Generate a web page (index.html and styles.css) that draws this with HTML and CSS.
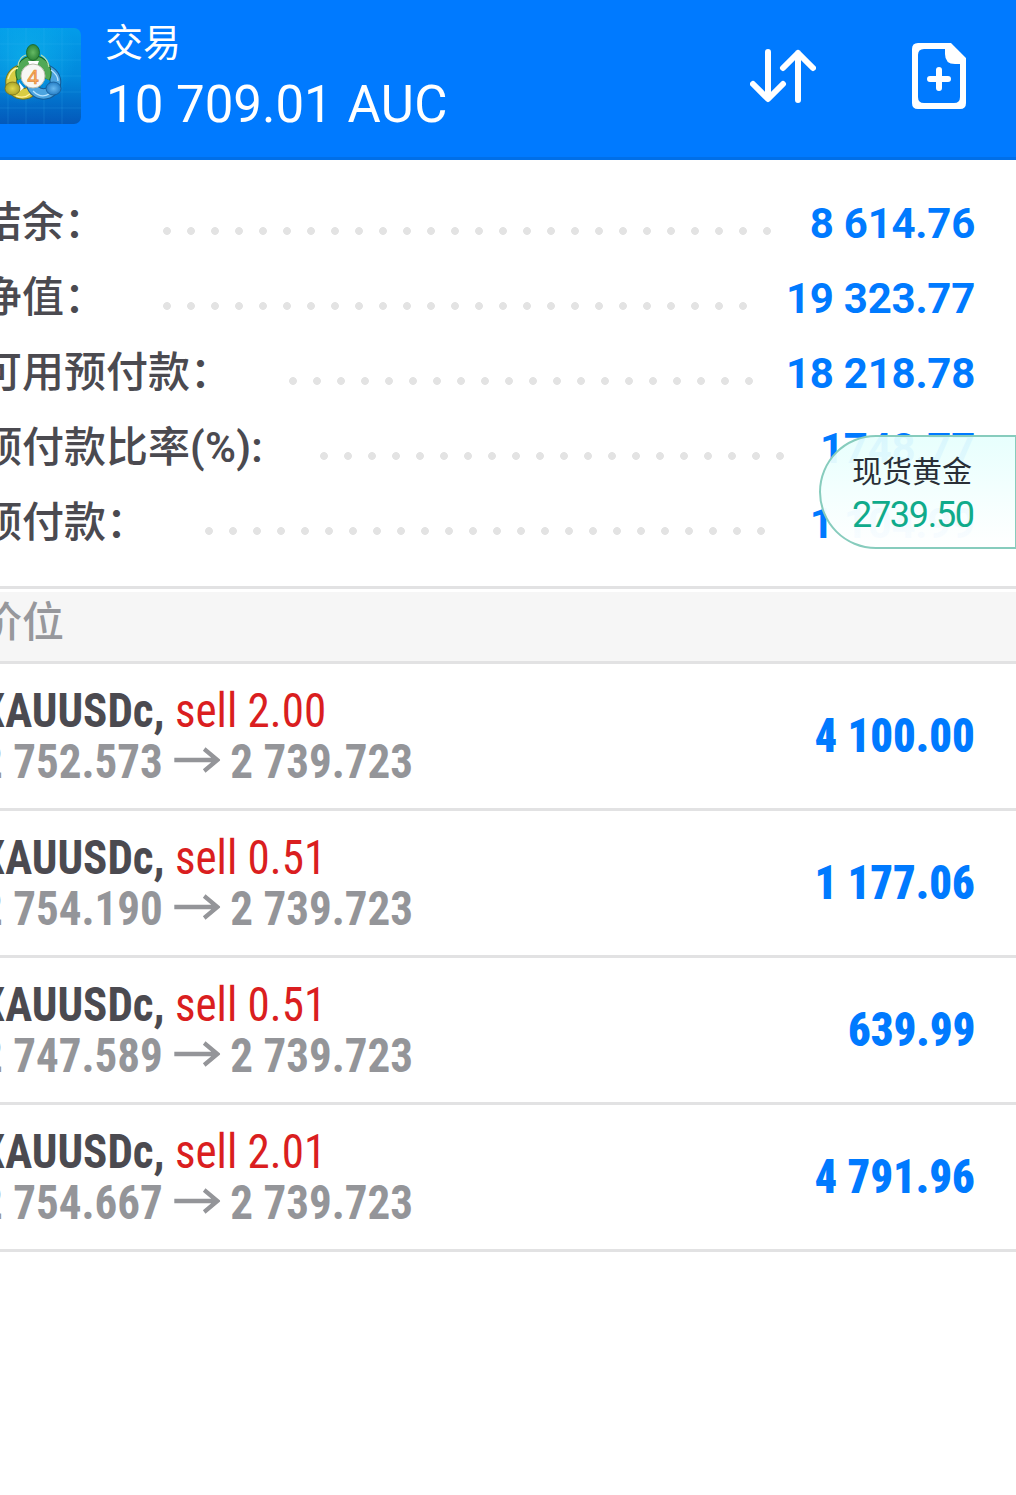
FILE: index.html
```html
<!DOCTYPE html>
<html lang="zh-CN">
<head>
<meta charset="utf-8">
<title>交易</title>
<link rel="stylesheet" href="styles.css">
</head>
<body>
<header class="topbar">
  <svg class="logo" width="101" height="96" viewBox="-20 0 101 96">
    <defs>
      <linearGradient id="tile" x1="0" y1="0" x2="0" y2="1"><stop offset="0" stop-color="#039ce9"/><stop offset=".5" stop-color="#0289dc"/><stop offset="1" stop-color="#0358ba"/></linearGradient>
      <radialGradient id="glow" cx=".46" cy=".3" r=".5"><stop offset="0" stop-color="#10b9ed" stop-opacity=".6"/><stop offset="1" stop-color="#10b9ed" stop-opacity="0"/></radialGradient>
      <radialGradient id="green"><stop offset="0" stop-color="#65b964"/><stop offset="1" stop-color="#2d8538"/></radialGradient>
      <radialGradient id="gold"><stop offset="0" stop-color="#e2d84a"/><stop offset="1" stop-color="#a9a328"/></radialGradient>
      <radialGradient id="blue"><stop offset="0" stop-color="#68b8ef"/><stop offset="1" stop-color="#267ec6"/></radialGradient>
    </defs>
    <rect x="-20" width="101" height="96" rx="7" fill="url(#tile)"/>
    <rect x="-20" width="101" height="96" rx="7" fill="url(#glow)"/>
    <path d="M8 0V96M26 0V96M44 0V96M62 0V96M-20 16H81M-20 32H81M-20 48H81M-20 64H81M-20 80H81" stroke="#43b9ef" stroke-opacity=".2" fill="none"/>
    <g fill="none">
      <circle cx="23" cy="54" r="12" stroke="#77751d" stroke-width="11.500"/>
      <circle cx="23" cy="54" r="12" stroke="#d8cd43" stroke-width="9.500"/>
      <circle cx="43.500" cy="54" r="12" stroke="#155b96" stroke-width="11.500"/>
      <circle cx="43.500" cy="54" r="12" stroke="#4ca4df" stroke-width="9.500"/>
      <path d="M22.500 50A12 12 0 1 1 44.500 50" stroke="#17651f" stroke-width="12"/>
      <path d="M22.500 50A12 12 0 1 1 44.500 50" stroke="#51a956" stroke-width="10"/>
      <path d="M18 38Q19 29 26 27M41 27Q48 31 49 39" stroke="#b8dfaf" stroke-width="1.3"/>
      <path d="M8 51Q11 41 18 40M16 68Q24 71 30 66" stroke="#fff2a0" stroke-width="1.3"/>
      <path d="M51 42Q58 47 58 53M33 63Q41 71 49 66" stroke="#b7e3ff" stroke-width="1.3"/>
    </g>
    <path d="M28 33H39L37 38H30ZM19 54L24 60 20 63Z" fill="#fff"/>
    <ellipse cx="33" cy="24.500" rx="6.500" ry="8" fill="url(#green)" stroke="#176226" stroke-width=".8"/>
    <ellipse cx="12.500" cy="60.500" rx="7.500" ry="6.500" fill="url(#gold)" stroke="#777019" stroke-width=".8"/>
    <ellipse cx="53.500" cy="60.500" rx="7.500" ry="6.500" fill="url(#blue)" stroke="#155b96" stroke-width=".8"/>
    <circle cx="33" cy="48" r="12" fill="#f7f7f4" stroke="#b9bcae"/>
    <text x="33" y="55.500" class="logo-number">4</text>
  </svg>
  <div class="heading"><div class="title">交易</div><div class="profit">10 709.01 <span class="currency">AUC</span></div></div>
  <svg class="sort" width="66" height="56" viewBox="0 0 66 56" fill="none" stroke="#fff" stroke-width="6" stroke-linecap="round" stroke-linejoin="round"><path d="M18 4V50M3 36L18 51 33 36M48 52V5M33 20L48 5 63 20"/></svg>
  <svg class="new-order" width="54" height="66" viewBox="0 0 54 66"><path fill="#fff" fill-rule="evenodd" d="M6 0H39L54 15V60Q54 66 48 66H6Q0 66 0 60V6Q0 0 6 0ZM12 6Q6 6 6 12V54Q6 60 12 60H42Q48 60 48 54V21H43Q33 21 33 11V6Z"/><path d="M27 27V45M18 36H36" stroke="#fff" stroke-width="6" stroke-linecap="round"/></svg>
</header>
<main>
  <section class="summary">
    <div class="line"><span class="label">结余：</span><i class="dots" style="--count:26"></i><b>8 614.76</b></div>
    <div class="line"><span class="label">净值：</span><i class="dots" style="--count:25"></i><b>19 323.77</b></div>
    <div class="line"><span class="label">可用预付款：</span><i class="dots" style="--count:20"></i><b>18 218.78</b></div>
    <div class="line"><span class="label">预付款比率<span class="latin">(%):</span></span><i class="dots" style="--count:20"></i><b>1748.77</b></div>
    <div class="line"><span class="label">预付款：</span><i class="dots" style="--count:24"></i><b>1 104.99</b></div>
    <aside class="quote"><span class="quote-name">现货黄金</span><span class="quote-price">2739.50</span></aside>
  </section>
  <h2 class="section-title">价位</h2>
  <section class="positions">
    <div class="position"><div class="deal"><div class="symbol">XAUUSDc, <span class="sell">sell 2.00</span></div><div class="prices"><span>2 752.573</span><svg class="arrow" width="49" height="26" viewBox="0 0 49 26"><path d="M0 13H46M32 2L46 13 32 24"/></svg><span>2 739.723</span></div></div><b class="gain">4 100.00</b></div>
    <div class="position"><div class="deal"><div class="symbol">XAUUSDc, <span class="sell">sell 0.51</span></div><div class="prices"><span>2 754.190</span><svg class="arrow" width="49" height="26" viewBox="0 0 49 26"><path d="M0 13H46M32 2L46 13 32 24"/></svg><span>2 739.723</span></div></div><b class="gain">1 177.06</b></div>
    <div class="position"><div class="deal"><div class="symbol">XAUUSDc, <span class="sell">sell 0.51</span></div><div class="prices"><span>2 747.589</span><svg class="arrow" width="49" height="26" viewBox="0 0 49 26"><path d="M0 13H46M32 2L46 13 32 24"/></svg><span>2 739.723</span></div></div><b class="gain">639.99</b></div>
    <div class="position"><div class="deal"><div class="symbol">XAUUSDc, <span class="sell">sell 2.01</span></div><div class="prices"><span>2 754.667</span><svg class="arrow" width="49" height="26" viewBox="0 0 49 26"><path d="M0 13H46M32 2L46 13 32 24"/></svg><span>2 739.723</span></div></div><b class="gain">4 791.96</b></div>
  </section>
</main>
</body>
</html>
```
FILE: styles.css
```css
* { box-sizing: border-box; }
body { margin: 0; height: 1495px; overflow: hidden; background: #fff; font-family: Roboto, "Noto Sans CJK SC", sans-serif; }
.topbar { display: flex; height: 160px; background: #007aff; border-bottom: 3px solid #006fe8; color: #fff; }
.logo { margin: 28px 0 0 -20px; flex: none; }
.logo-number { font: 400 21px "Liberation Sans", sans-serif; text-anchor: middle; fill: #ffab58; stroke: #e08a38; stroke-width: .7px; }
.heading { width: 669px; padding: 15px 0 0 25px; white-space: nowrap; }
.title { font-size: 38px; line-height: 57px; text-indent: -1px; }
.profit { font-size: 51px; line-height: 66px; }
.currency { margin-left: 2px; letter-spacing: .5px; }
.sort { margin-top: 48px; flex: none; }
.new-order { margin: 43px 0 0 96px; flex: none; }
.summary { position: relative; height: 429px; padding: 26px 41px 0 0; border-bottom: 3px solid #e2e2e3; }
.line { display: flex; height: 75px; line-height: 75px; font-size: 42px; margin-left: -20px; white-space: nowrap; }
.label { height: 73px; line-height: 73px; color: #4b4a50; font-weight: 500; }
.latin { letter-spacing: .3px; font-weight: 600; }
.line b { margin-left: auto; color: #007aff; font-weight: 700; letter-spacing: -.25px; }
.dots { width: calc(var(--count) * 24px); height: 8px; margin: 41px 0 0 49px; background: radial-gradient(circle at center, #e3e3e3 3.5px, transparent 4.3px) 0 0 / 24px 8px; }
.quote { position: absolute; top: 275px; right: 0; width: 197px; height: 114px; padding: 13px 0 0 31px; display: flex; flex-direction: column; border: 2px solid #87ccbd; border-right-width: 1px; border-radius: 57px 0 0 57px; background: linear-gradient(#e6fffdf0, #fffffffa); }
.quote-name { font-size: 30px; line-height: 44px; color: #292f36; }
.quote-price { font-size: 36px; line-height: 42px; letter-spacing: -1.3px; color: #10ab8b; }
.section-title { height: 75px; margin: 0; border-top: 3px solid #fff; border-bottom: 3px solid #e2e2e3; background: #f6f6f6; color: #97989c; font-size: 42px; line-height: 61px; font-weight: 500; text-indent: -20px; }
.position { height: 147px; padding: 21px 41px 0 0; margin-left: -20px; display: flex; justify-content: space-between; border-bottom: 3px solid #e2e2e3; font-family: "Roboto Condensed", Roboto, sans-serif; font-stretch: 75%; font-size: 48px; font-weight: 700; white-space: nowrap; }
.deal { transform: scaleX(.938); transform-origin: left; }
.symbol { height: 51px; line-height: 52px; color: #4b4a50; }
.sell { color: #da1e20; font-weight: 400; }
.prices { display: flex; align-items: center; height: 51px; line-height: 51px; color: #949599; }
.arrow { margin: 0 11px 3px 12px; fill: none; stroke: #949599; stroke-width: 4.5; }
.gain { height: 102px; line-height: 102px; color: #007aff; transform: scaleX(.928); transform-origin: right; }
```
